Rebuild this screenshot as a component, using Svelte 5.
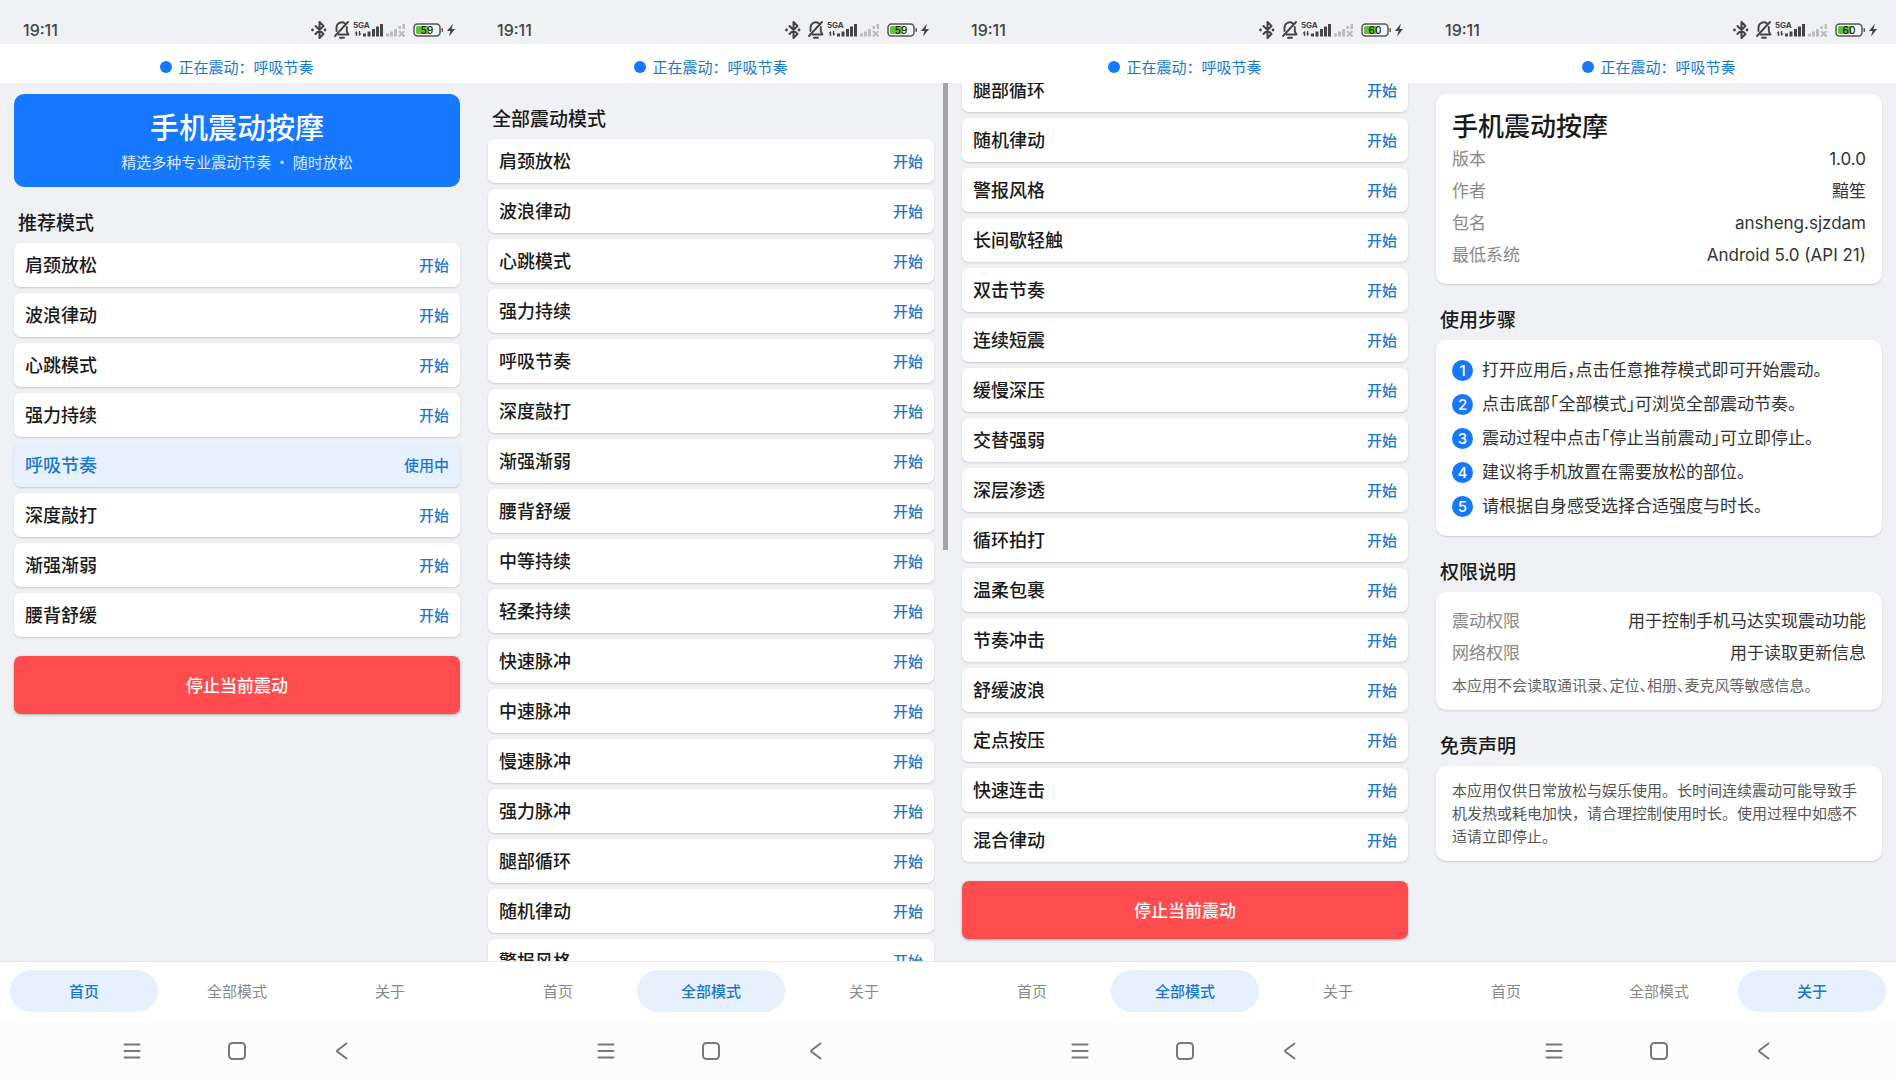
<script lang="ts">
  type Screen = {
    tab: string;
    battery: number;
    title?: string;
    modes?: string[];
    active?: string;
    atEnd?: boolean;
    scrollbar?: boolean;
  };

  const tabs = ['首页', '全部模式', '关于'];

  const recommended = [
    '肩颈放松', '波浪律动', '心跳模式', '强力持续',
    '呼吸节奏', '深度敲打', '渐强渐弱', '腰背舒缓'
  ];

  const allModes = [
    ...recommended,
    '中等持续', '轻柔持续', '快速脉冲', '中速脉冲', '慢速脉冲', '强力脉冲',
    '腿部循环', '随机律动', '警报风格', '长间歇轻触', '双击节奏', '连续短震',
    '缓慢深压', '交替强弱', '深层渗透', '循环拍打', '温柔包裹', '节奏冲击',
    '舒缓波浪', '定点按压', '快速连击', '混合律动'
  ];

  const screens: Screen[] = [
    { tab: '首页', battery: 59, title: '推荐模式', modes: recommended, active: '呼吸节奏' },
    { tab: '全部模式', battery: 59, title: '全部震动模式', modes: allModes, scrollbar: true },
    { tab: '全部模式', battery: 60, title: '全部震动模式', modes: allModes, atEnd: true },
    { tab: '关于', battery: 60 }
  ];

  const info = [
    ['版本', '1.0.0'],
    ['作者', '黯笙'],
    ['包名', 'ansheng.sjzdam'],
    ['最低系统', 'Android 5.0 (API 21)']
  ];

  const steps = [
    '打开应用后，点击任意推荐模式即可开始震动。',
    '点击底部「全部模式」可浏览全部震动节奏。',
    '震动过程中点击「停止当前震动」可立即停止。',
    '建议将手机放置在需要放松的部位。',
    '请根据自身感受选择合适强度与时长。'
  ];

  const permissions = [
    ['震动权限', '用于控制手机马达实现震动功能'],
    ['网络权限', '用于读取更新信息']
  ];

  let thumb = $state(0);

  function scroller(node: HTMLElement, screen: Screen) {
    if (screen.atEnd) node.scrollTop = node.scrollHeight;
    if (screen.scrollbar) thumb = (node.clientHeight / node.scrollHeight) * 100;
  }
</script>

<main class="screens" lang="zh-CN">
  {#each screens as screen}
    <section class="phone">
      <header class="status">
        <time>19:11</time>
        <svg class="status-icons" width="148" height="24" viewBox="0 0 148 24" aria-hidden="true">
          <!-- bluetooth -->
          <g fill="none" stroke="#444" stroke-width="2" stroke-linejoin="round" stroke-linecap="round">
            <path d="M5.500 8l8 8-4 4V4l4 4-8 8" />
          </g>
          <circle cx="2.500" cy="12" r="1.400" fill="#444" />
          <circle cx="15" cy="12" r="1.400" fill="#444" />
          <!-- muted bell -->
          <g fill="none" stroke="#444" stroke-width="1.900" stroke-linecap="round" stroke-linejoin="round">
            <path d="M26.500 13V9.500a5.200 5.200 0 0 1 8.500-4M36.800 9v4.500l1.700 3H28.500" />
            <path d="M38 4 25 18" />
            <path d="M30 19.700h4" />
          </g>
          <text x="43" y="10" font-size="8" font-weight="700" fill="#444">5GA</text>
          <!-- data arrows and first sim -->
          <g fill="#444">
            <path d="M46.500 13l-2 2.500h1.300V18h1.400v-4zM49.500 18l2-2.500h-1.300V13h-1.400v4z" />
            <rect x="53" y="15.500" width="3" height="3" />
            <rect x="57.500" y="13.500" width="3" height="5" />
            <rect x="62" y="11" width="3" height="7.500" />
            <rect x="66" y="8.500" width="3" height="10" />
            <rect x="70" y="6" width="3" height="12.500" />
          </g>
          <!-- second sim without signal -->
          <g fill="#bcbcbe">
            <rect x="76" y="15.500" width="3" height="3" />
            <rect x="80" y="13.500" width="3" height="5" />
            <rect x="84" y="11" width="3" height="7.500" />
            <rect x="88.500" y="8" width="2.500" height="3" />
            <rect x="92.500" y="6" width="2.500" height="5" />
          </g>
          <path d="M89 13l5.500 5.500M94.500 13l-5.500 5.500" stroke="#bcbcbe" stroke-width="2" />
          <!-- battery -->
          <rect x="104" y="6" width="26" height="12" rx="3.500" fill="#f4f6f4" stroke="#555" stroke-width="1.500" />
          <rect x="106" y="8" width={22 * screen.battery / 100} height="8" rx="1.500" fill="#62c23a" />
          <rect x="131.500" y="10" width="1.500" height="4" rx="0.700" fill="#555" />
          <text x="117" y="15.500" font-size="10" font-weight="500" text-anchor="middle" fill="#222">{screen.battery}</text>
          <path d="M143 5.500l-6 7.500h3.500l-1.500 5.500 6-7.500h-3.500z" fill="#444" />
        </svg>
      </header>

      <div class="notice"><i class="dot"></i>正在震动：呼吸节奏</div>

      <div class="viewport">
        <div class="content" use:scroller={screen}>
          {#if screen.tab === '首页'}
            <div class="hero">
              <h1>手机震动按摩</h1>
              <p>精选多种专业震动节奏 · 随时放松</p>
            </div>
          {/if}

          {#if screen.modes}
            <h2>{screen.title}</h2>
            <ul class="modes">
              {#each screen.modes as mode}
                <li class:active={mode === screen.active}>
                  <span>{mode}</span>
                  <button>{mode === screen.active ? '使用中' : '开始'}</button>
                </li>
              {/each}
            </ul>
            <button class="stop">停止当前震动</button>
          {:else}
            <div class="card about">
              <h1>手机震动按摩</h1>
              <dl>
                {#each info as [label, value]}
                  <div><dt>{label}</dt><dd>{value}</dd></div>
                {/each}
              </dl>
            </div>

            <h2>使用步骤</h2>
            <ol class="card steps">
              {#each steps as step, i}
                <li><b>{i + 1}</b><span>{step}</span></li>
              {/each}
            </ol>

            <h2>权限说明</h2>
            <div class="card">
              <dl>
                {#each permissions as [label, value]}
                  <div><dt>{label}</dt><dd>{value}</dd></div>
                {/each}
              </dl>
              <p class="note">本应用不会读取通讯录、定位、相册、麦克风等敏感信息。</p>
            </div>

            <h2>免责声明</h2>
            <div class="card">
              <p>本应用仅供日常放松与娱乐使用。长时间连续震动可能导致手机发热或耗电加快，请合理控制使用时长。使用过程中如感不适请立即停止。</p>
            </div>
          {/if}
        </div>
        {#if screen.scrollbar}
          <div class="thumb" style="height: {thumb}%"></div>
        {/if}
      </div>

      <nav class="tabs">
        {#each tabs as tab}
          <button class:current={tab === screen.tab}>{tab}</button>
        {/each}
      </nav>

      <footer class="system">
        <button aria-label="最近任务">
          <svg width="20" height="20" viewBox="0 0 20 20"><path d="M2.500 3.500h15M2.500 10h15M2.500 16.500h15" /></svg>
        </button>
        <button aria-label="主屏幕">
          <svg width="20" height="20" viewBox="0 0 20 20"><rect x="2" y="2" width="16" height="16" rx="3.500" /></svg>
        </button>
        <button aria-label="返回">
          <svg width="20" height="20" viewBox="0 0 20 20"><path d="M14.500 2.500 5.500 9.200q-1 .8 0 1.600l9 6.700" /></svg>
        </button>
      </footer>
    </section>
  {/each}
</main>

<style>
  :global(body) {
    margin: 0;
    background: #f0f1f5;
  }
  .screens {
    display: flex;
    height: 100vh;
    font-family: Inter, "Noto Sans CJK SC", sans-serif;
    color: #1a1a1a;
  }
  .phone {
    flex: 1;
    min-width: 0;
    display: flex;
    flex-direction: column;
  }
  h1, h2, p, ul, ol, dl, dd {
    margin: 0;
    padding: 0;
  }
  button {
    border: none;
    padding: 0;
    background: none;
    font: inherit;
    color: inherit;
    cursor: pointer;
  }
  .status {
    display: flex;
    justify-content: space-between;
    align-items: flex-end;
    height: 44px;
    padding: 0 16px 2px 23px;
    box-sizing: border-box;
    color: #444;
    font-size: 16px;
    font-weight: 500;
    line-height: 24px;
  }
  .notice {
    display: flex;
    justify-content: center;
    align-items: center;
    gap: 6px;
    height: 39px;
    padding-top: 6px;
    box-sizing: border-box;
    background: #fff;
    color: #1976d2;
    font-size: 15px;
  }
  .dot {
    width: 12px;
    height: 12px;
    border-radius: 50%;
    background: #1677ff;
  }
  .viewport {
    position: relative;
    flex: 1;
    min-height: 0;
  }
  .content {
    display: flex;
    flex-direction: column;
    height: 100%;
    padding: 11px 14px 22px;
    box-sizing: border-box;
    overflow-y: auto;
    scrollbar-width: none;
  }
  .content > * {
    flex-shrink: 0;
  }
  .thumb {
    position: absolute;
    top: 0;
    right: 0;
    width: 5px;
    background: #a4a4a6;
  }
  .hero {
    margin-bottom: 11px;
    padding: 14px 0 13px;
    border-radius: 10px;
    background: #1677ff;
    color: #fff;
    text-align: center;
  }
  .hero h1 {
    font-size: 29px;
    line-height: 42px;
    font-weight: 500;
  }
  .hero p {
    font-family: "Noto Sans CJK SC", sans-serif;
    font-size: 15px;
    line-height: 24px;
    color: #dceaff;
  }
  h2 {
    margin: 13px 0 6px;
    padding-left: 4px;
    font-size: 19px;
    line-height: 26px;
    font-weight: 500;
  }
  .modes {
    display: flex;
    flex-direction: column;
    gap: 6px;
    list-style: none;
  }
  .modes li {
    display: flex;
    justify-content: space-between;
    align-items: center;
    height: 44px;
    padding: 0 11px 2px;
    box-sizing: border-box;
    border-radius: 7px;
    background: #fff;
    box-shadow: 0 1px 2px rgba(0, 0, 0, 0.16);
    font-size: 18px;
    font-weight: 500;
  }
  .modes button {
    color: #1976d2;
    font-size: 15px;
  }
  .modes li.active {
    background: #e6f1fd;
    color: #1976d2;
  }
  .stop {
    height: 58px;
    margin-top: 19px;
    padding-bottom: 2px;
    border-radius: 7px;
    background: #ff4d4f;
    box-shadow: 0 1px 3px rgba(0, 0, 0, 0.3);
    color: #fff;
    font-size: 17px;
    font-weight: 500;
  }
  .card {
    margin-bottom: 11px;
    padding: 13px 16px;
    border-radius: 10px;
    background: #fff;
    box-shadow: 0 1px 2px rgba(0, 0, 0, 0.16);
  }
  .about {
    padding-top: 17px;
  }
  .about h1 {
    font-size: 26px;
    line-height: 32px;
    font-weight: 500;
  }
  dl div {
    display: flex;
    justify-content: space-between;
    font-size: 17px;
    line-height: 32px;
  }
  dt {
    color: #888;
  }
  dd {
    color: #333;
  }
  .steps {
    list-style: none;
    font-feature-settings: "halt";
  }
  .steps li {
    display: flex;
    align-items: center;
    gap: 9px;
    color: #333;
    font-size: 17px;
    line-height: 34px;
  }
  .steps b {
    width: 21px;
    border-radius: 50%;
    background: #1677ff;
    color: #fff;
    font-size: 15px;
    line-height: 21px;
    font-weight: 500;
    text-align: center;
  }
  .card p {
    color: #555;
    font-size: 15px;
    line-height: 23px;
  }
  .card .note {
    margin-top: 5px;
    color: #666;
    font-feature-settings: "halt";
  }
  .tabs {
    display: flex;
    gap: 5px;
    padding: 8px 10px 10px;
    border-top: 1px solid #e8e9ec;
    background: #fff;
  }
  .tabs button {
    flex: 1;
    height: 42px;
    padding-bottom: 2px;
    border-radius: 21px;
    color: #888;
    font-size: 15px;
  }
  .tabs .current {
    background: #e6f1fd;
    color: #1976d2;
    font-weight: 500;
  }
  .system {
    display: flex;
    justify-content: center;
    align-items: center;
    gap: 73px;
    height: 58px;
    background: #fcfcfc;
  }
  .system button {
    width: 32px;
    height: 32px;
  }
  .system svg {
    display: block;
    margin: auto;
    fill: none;
    stroke: #777;
    stroke-width: 2;
    stroke-linecap: round;
    stroke-linejoin: round;
  }
</style>
